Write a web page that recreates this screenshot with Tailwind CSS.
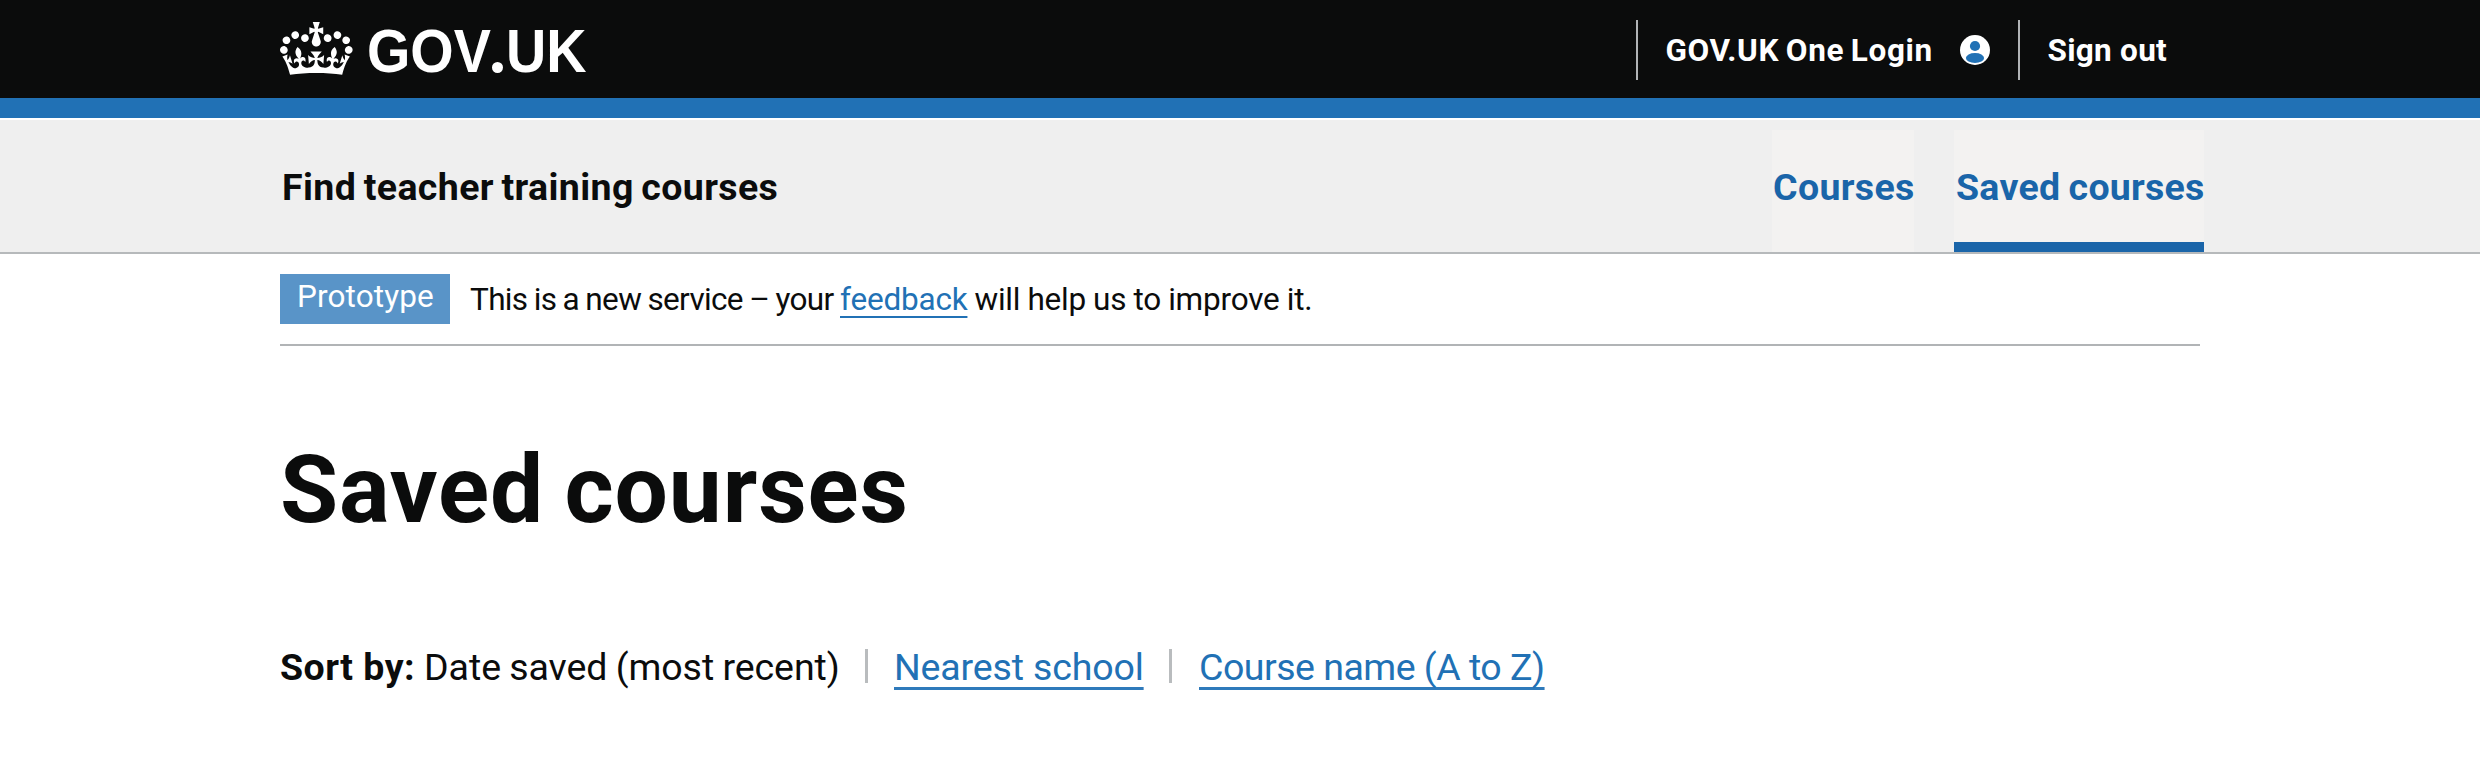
<!DOCTYPE html>
<html lang="en">
<head>
<meta charset="utf-8">
<title>Saved courses - Find teacher training courses</title>
<script src="https://cdn.jsdelivr.net/npm/@tailwindcss/browser@4"></script>
</head>
<body class="min-h-[760px] bg-white text-[#0b0c0c] font-[Roboto,'Noto_Sans',sans-serif] whitespace-nowrap">

<header class="h-[98px] bg-[#0b0c0c] px-[280px] pt-0.5 flex items-center text-white">
  <a class="flex items-center" aria-label="GOV.UK">
    <svg class="w-[72.6px] h-[53.4px] -mt-[3px]" viewBox="0 0 132 97" fill="currentColor"><path d="M25 30.2c3.5 1.5 7.7-.2 9.1-3.7 1.5-3.6-.2-7.8-3.9-9.2-3.6-1.4-7.6.3-9.1 3.9-1.4 3.5.3 7.5 3.9 9zM9 39.5c3.6 1.5 7.8-.2 9.2-3.7 1.5-3.6-.2-7.8-3.9-9.1-3.6-1.5-7.6.2-9.1 3.8-1.4 3.5.3 7.5 3.8 9zM4.4 57.2c3.5 1.5 7.7-.2 9.1-3.8 1.5-3.6-.2-7.7-3.9-9.1-3.5-1.5-7.6.3-9.1 3.8-1.4 3.5.3 7.6 3.9 9.1zm38.3-21.4c3.5 1.5 7.7-.2 9.1-3.8 1.5-3.6-.2-7.7-3.9-9.1-3.6-1.5-7.6.3-9.1 3.8-1.3 3.6.4 7.7 3.9 9.1zm64.4-5.6c-3.6 1.5-7.8-.2-9.1-3.7-1.5-3.6.2-7.8 3.8-9.2 3.6-1.4 7.7.3 9.2 3.9 1.3 3.5-.4 7.5-3.9 9zm15.9 9.3c-3.6 1.5-7.7-.2-9.1-3.7-1.5-3.6.2-7.8 3.7-9.1 3.6-1.5 7.7.2 9.2 3.8 1.5 3.5-.3 7.5-3.8 9zm4.7 17.7c-3.6 1.5-7.8-.2-9.2-3.8-1.5-3.6.2-7.7 3.9-9.1 3.6-1.5 7.7.3 9.2 3.8 1.3 3.5-.4 7.6-3.9 9.1zM89.3 35.8c-3.6 1.5-7.8-.2-9.2-3.8-1.4-3.6.2-7.7 3.9-9.1 3.6-1.5 7.7.3 9.2 3.8 1.4 3.6-.3 7.7-3.9 9.1zM69.7 17.7l8.9 4.7V9.3l-8.9 2.8c-.2-.3-.5-.6-.9-.9L72.4 0H59.6l3.5 11.2c-.3.3-.6.5-.9.9l-8.8-2.8v13.1l8.8-4.7c.3.3.6.7.9.9l-5 15.4v.1c-.2.8-.4 1.6-.4 2.4 0 4.1 3.1 7.5 7 8.1h.2c.3 0 .7.1 1 .1.4 0 .7 0 1-.1h.2c4-.6 7.1-4.1 7.1-8.1 0-.8-.1-1.7-.4-2.4V34l-5.1-15.4c.4-.2.7-.6 1-.9zM66 92.8c16.9 0 32.8 1.1 47.1 3.2 4-16.9 8.9-26.7 14-33.5l-9.6-3.4c1 4.9 1.1 7.2 0 10.2-1.5-1.4-3-4.3-4.2-8.7L108.6 76c2.8-2 5-3.2 7.5-3.3-4.4 9.4-10 11.9-13.6 11.2-4.3-.8-6.3-4.6-5.6-7.9 1-4.7 5.7-5.9 8-.5 4.3-8.7-3-11.4-7.6-8.8 7.1-7.2 7.9-13.5 2.1-21.1-8 6.1-8.1 12.3-4.5 20.8-4.7-5.4-12.1-2.5-9.5 6.2 3.4-5.2 7.9-2 7.2 3.1-.6 4.3-6.4 7.8-13.5 7.2-10.3-.9-10.9-8-11.2-13.8 2.5-.5 7.1 1.8 11 7.3L80.2 60c-4.1 4.4-8 5.3-12.3 5.4 1.4-4.4 8-11.6 8-11.6H55.5s6.4 7.2 7.9 11.6c-4.2-.1-8-1-12.3-5.4l1.4 16.4c3.9-5.5 8.5-7.7 10.9-7.3-.3 5.8-.9 12.8-11.1 13.8-7.2.6-12.9-2.9-13.5-7.2-.7-5 3.8-8.3 7.1-3.1 2.7-8.7-4.6-11.6-9.4-6.2 3.7-8.5 3.6-14.7-4.6-20.8-5.8 7.6-5 13.9 2.2 21.1-4.7-2.6-11.9.1-7.7 8.8 2.3-5.5 7.1-4.2 8.1.5.7 3.3-1.3 7.1-5.7 7.9-3.5.7-9-1.8-13.5-11.2 2.5.1 4.7 1.3 7.5 3.3l-4.7-15.4c-1.2 4.4-2.7 7.2-4.3 8.7-1.1-3-.9-5.3 0-10.2l-9.5 3.4c5 6.9 9.9 16.7 14 33.5 14.8-2.1 30.8-3.2 47.7-3.2z"/></svg>
    <span class="ml-[14.4px] pt-0.5 flex font-['Liberation_Sans',Arial,sans-serif] font-bold text-[61px] leading-[70px]">
      <span class="w-[124.8px]"><span class="inline-block origin-left scale-x-[0.914]">GOV</span></span>
      <span class="w-[11px] h-[11px] mt-[46px] rounded-full bg-white text-[11px] leading-[11px] text-transparent text-center">.</span>
      <span class="ml-[3.5px]"><span class="inline-block origin-left scale-x-[0.914]">UK</span></span>
    </span>
  </a>
  <nav class="ml-auto mr-[33px] flex items-center font-bold text-[31.5px] leading-[40px]">
    <span class="w-0.5 h-[60px] bg-[#b1b4b6]"></span>
    <a class="ml-[27.7px] pt-0.5 tracking-[0.6px] [word-spacing:-1.6px]">GOV.UK One Login</a>
    <svg class="ml-[27.2px] w-[30px] h-[30px]" viewBox="0 0 30 30"><circle cx="15" cy="15" r="15" fill="#fff"/><circle cx="15" cy="11" r="5.1" fill="#2171b5"/><ellipse cx="15" cy="23" rx="9.1" ry="5.1" fill="#2171b5"/></svg>
    <span class="ml-7 w-0.5 h-[60px] bg-[#b1b4b6]"></span>
    <a class="ml-[27.7px] pt-0.5 tracking-[0.266px]">Sign out</a>
  </nav>
</header>
<div class="h-5 bg-[#2171b5]"></div>

<section class="mt-0.5 h-[134px] bg-[#efefef] border-b-2 border-[#b6b9bb] pl-[282px] pr-[276px] pt-2.5 flex justify-between font-bold text-[37.5px] leading-[114px]">
  <a class="tracking-[0.4px] [word-spacing:-2.3px]">Find teacher training courses</a>
  <nav class="flex gap-10 text-[#1a65a9]">
    <a class="w-[142px] pl-px bg-[#f3f2f1] tracking-[0.341px]">Courses</a>
    <a class="w-[250px] pl-0.5 bg-[#f3f2f1] border-b-[10px] border-[#1a65a9] tracking-[0.25px] [word-spacing:-1.2px]">Saved courses</a>
  </nav>
</section>

<main class="px-[280px]">
  <div class="pt-5 pb-5 border-b-2 border-[#b1b4b6] flex items-center text-[31.5px]">
    <strong class="w-[170px] h-[50px] pl-[17px] bg-[#5994c8] text-white font-normal leading-[46px] tracking-[0.117px]">Prototype</strong>
    <p class="ml-5 pt-0.5 leading-10 flex">
      <span class="w-[370px] tracking-[-0.65px] [word-spacing:-0.9px]">This is a new service – your</span>
      <a class="text-[#2171b5] tracking-[-0.2px] underline decoration-2 underline-offset-[6px]">feedback</a>
      <span class="ml-[7px] tracking-[-0.2px] [word-spacing:-0.5px]">will help us to improve it.</span>
    </p>
  </div>
  <h1 class="mt-[94px] h-[100px] leading-[100px] text-[94.5px] font-bold tracking-[0.9px] [word-spacing:-4px]">Saved courses</h1>
  <p class="mt-[107px] flex text-[37.5px] leading-10">
    <b class="w-[144px] tracking-[0.474px]">Sort by:</b>
    <span class="w-[441px] tracking-[-0.05px] [word-spacing:-1px]">Date saved (most recent)</span>
    <span class="mt-0.5 w-[3px] h-[34px] bg-[#b9bcbe]"></span>
    <a class="ml-[26px] w-[249px] text-[#2171b5] tracking-[-0.15px] underline decoration-[#2f7abb] [text-decoration-thickness:3px] underline-offset-[7px] [text-decoration-skip-ink:none]">Nearest school</a>
    <span class="ml-[26px] mt-0.5 w-[3px] h-[34px] bg-[#b9bcbe]"></span>
    <a class="ml-[27px] text-[#2171b5] tracking-[-0.503px] underline decoration-[#2f7abb] [text-decoration-thickness:3px] underline-offset-[7px] [text-decoration-skip-ink:none]">Course name (A to Z)</a>
  </p>
</main>
</body>
</html>
